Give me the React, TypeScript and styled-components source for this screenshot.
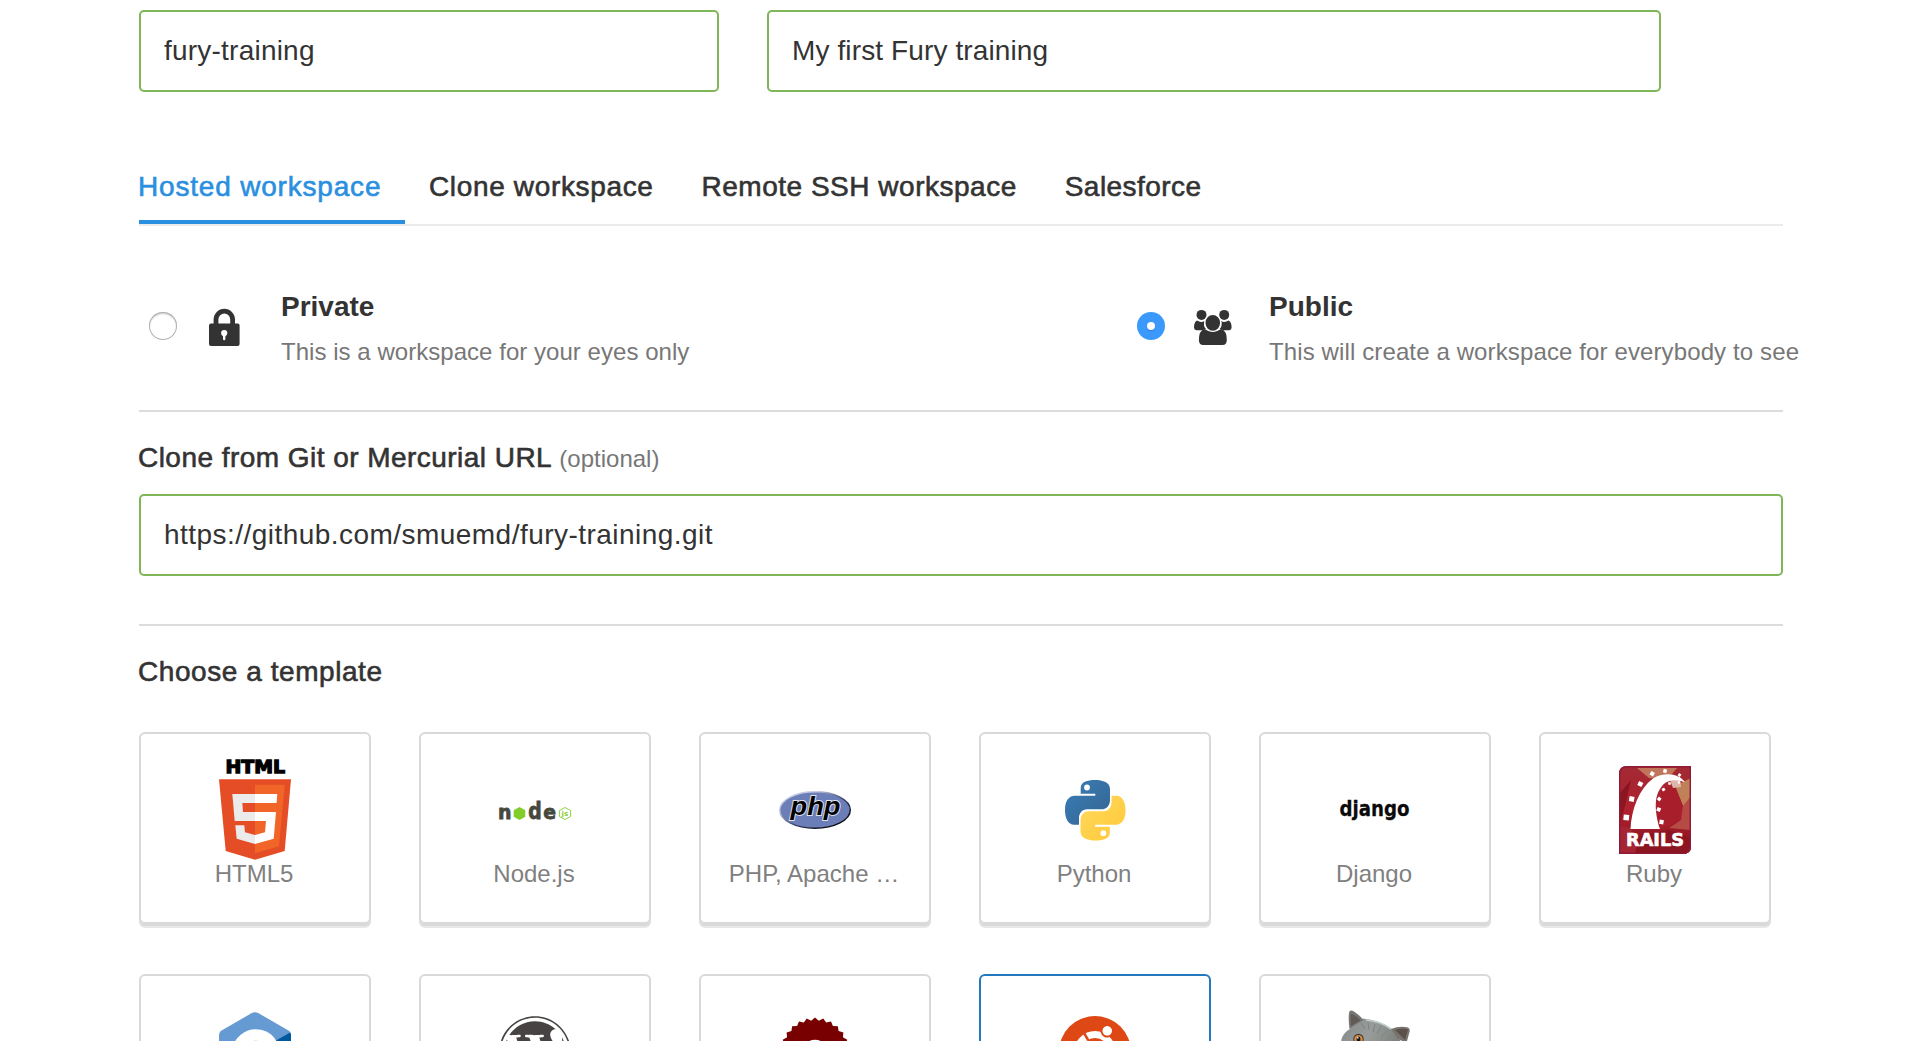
import React from 'react';
import styled, { createGlobalStyle } from 'styled-components';
import { FaWordpress } from 'react-icons/fa';

const GlobalStyle = createGlobalStyle`
  *, *::before, *::after { box-sizing: border-box; }
  body {
    margin: 0;
    background: #fff;
    color: #333;
    font-family: "Liberation Sans", Arial, Helvetica, sans-serif;
    overflow: hidden;
  }
`;

const Page = styled.main`
  height: 1041px;
  padding: 10px 0 0 139px;
  overflow: hidden;
`;

const Form = styled.form`
  width: 1644px;
  display: flex;
  flex-direction: column;
`;

const FieldRow = styled.div`
  display: flex;
  gap: 48px;
`;

const Field = styled.div<{ $width?: number; $tracking?: number }>`
  width: ${p => (p.$width ? `${p.$width}px` : '100%')};
  height: 82px;
  padding: 0 23px;
  display: flex;
  align-items: center;
  border: 2px solid #7fb658;
  border-radius: 5px;
  font-size: 28px;
  line-height: 32px;
  letter-spacing: ${p => p.$tracking ?? 0.22}px;
  white-space: nowrap;
`;

const Tabs = styled.nav`
  display: flex;
  margin-top: 60px;
  border-bottom: 2px solid #ebebeb;
`;

const Tab = styled.div<{ $active?: boolean; $tracking: number }>`
  height: 72px;
  padding: 19px 24px 0;
  font-size: 28px;
  line-height: 32px;
  letter-spacing: ${p => p.$tracking}px;
  white-space: nowrap;
  color: ${p => (p.$active ? '#2b8fe0' : '#333')};
  -webkit-text-stroke: 0.6px currentColor;
  border-bottom: 4px solid ${p => (p.$active ? '#2b8fe0' : 'transparent')};
  &:first-child {
    width: 266px;
    padding-left: 0;
    text-indent: -1px;
  }
`;

const Options = styled.div`
  display: flex;
  padding: 64px 0 42px 10px;
`;

const Option = styled.label`
  flex: 0 0 988px;
  display: flex;
  align-items: flex-start;
`;

const Radio = styled.span<{ $checked?: boolean }>`
  flex: none;
  width: 28px;
  height: 28px;
  margin-top: 22px;
  display: flex;
  align-items: center;
  justify-content: center;
  border-radius: 50%;
  background: ${p => (p.$checked ? '#3b99fc' : '#fff')};
  box-shadow: ${p => (p.$checked ? 'none' : 'inset 0 0 0 1px #b2b2b2, inset 0 2px 2px #ccc')};
  &::after {
    content: "";
    width: 8px;
    height: 8px;
    border-radius: 50%;
    background: #fff;
    box-shadow: ${p => (p.$checked ? '0 1px 1px #2a78d0' : 'none')};
  }
`;

const OptionIcon = styled.span<{ $indent: number }>`
  flex: none;
  width: 104px;
  padding: 19px 0 0 ${p => p.$indent}px;
  svg { display: block; overflow: visible; }
`;

const OptionText = styled.span`
  display: flex;
  flex-direction: column;
  gap: 13px;
  padding-top: 1px;
  white-space: nowrap;
`;

const OptionTitle = styled.strong`
  font-size: 28px;
  line-height: 32px;
`;

const OptionHint = styled.span<{ $tracking: number }>`
  color: #777;
  font-size: 24px;
  line-height: 32px;
  letter-spacing: ${p => p.$tracking}px;
`;

const Rule = styled.hr`
  width: 100%;
  height: 2px;
  margin: 0;
  border: 0;
  background: #dcdcdc;
`;

const Heading = styled.h2<{ $tracking: number; $bottom: number }>`
  height: 32px;
  margin: 30px 0 ${p => p.$bottom}px -1px;
  font-size: 28px;
  font-weight: 400;
  line-height: 32px;
  letter-spacing: ${p => p.$tracking}px;
  white-space: nowrap;
  -webkit-text-stroke: 0.6px currentColor;
`;

const Optional = styled.span`
  color: #777;
  font-size: 24px;
  line-height: 24px;
  letter-spacing: 0;
  -webkit-text-stroke: 0;
`;

const Spacer = styled.div`
  height: 48px;
`;

const Grid = styled.div`
  display: grid;
  grid-template-columns: repeat(6, 232px);
  gap: 50px 48px;
`;

const Card = styled.div<{ $selected?: boolean }>`
  height: 192px;
  padding-top: 28px;
  display: flex;
  flex-direction: column;
  align-items: center;
  border: 2px solid ${p => (p.$selected ? '#2478bd' : '#d9d9d9')};
  border-radius: 6px;
  box-shadow: 0 2px 0 ${p => (p.$selected ? '#2478bd' : '#d9d9d9')}, 0 4px 0 #e8e7e6;
`;

const Logo = styled.div`
  flex: none;
  height: 96px;
  display: flex;
  align-items: center;
  justify-content: center;
  svg { display: block; flex: none; overflow: visible; }
`;

const CardLabel = styled.span`
  padding-right: 2px;
  color: #808080;
  font-size: 24px;
  line-height: 32px;
  white-space: nowrap;
`;

const LockIcon = () => (
  <svg width="31" height="37" viewBox="0 0 31 37">
    <path d="M7 16V10.500a8.300 8.300 0 0 1 16.600 0V16" fill="none" stroke="#333" strokeWidth="4.800" />
    <rect x="0" y="14.500" width="30.600" height="22.500" rx="2" fill="#333" />
    <circle cx="15.200" cy="24" r="3.100" fill="#fff" />
    <path d="M15.200 24V30" stroke="#fff" strokeWidth="2.400" strokeLinecap="round" />
  </svg>
);

const GroupIcon = () => (
  <svg width="38" height="36" viewBox="0 -1 38 36" fill="#333">
    <circle cx="7.500" cy="4.900" r="5" />
    <circle cx="30.200" cy="4.900" r="5" />
    <path d="M3 10.500Q7 13 10.500 11Q9 16 12 19Q9 20 8 20.300H2.500Q0 20 0 17.500Q0 12 3 10.500Z" />
    <path d="M34.600 10.500Q30.600 13 27.100 11Q28.600 16 25.600 19Q28.600 20 29.600 20.300H35.100Q37.600 20 37.600 17.500Q37.600 12 34.600 10.500Z" />
    <path d="M10.500 19Q18.800 24.800 27.100 19Q32.800 20.500 32.800 30Q32.800 35 28.500 35H9.200Q4.900 35 4.900 30Q4.900 20.500 10.500 19Z" />
    <ellipse cx="18.800" cy="12.800" rx="8" ry="8.600" stroke="#fff" strokeWidth="1.400" />
  </svg>
);

const Html5Logo = () => (
  <svg width="72" height="103" viewBox="0 0 72 103">
    <text x="6.500" y="14.400" fontSize="18" fontWeight="700" fontFamily="DejaVu Sans" textLength="59.500" lengthAdjust="spacingAndGlyphs" fill="#000" stroke="#000" strokeWidth="1.300">HTML</text>
    <path d="M0 20.300H72L65.700 92L36 100.700L6.700 92Z" fill="#e44d26" />
    <path d="M36 25.700H65.700L60 87.300L36 94.300Z" fill="#f16529" />
    <path d="M36 35H13.300L15.700 62H36V53H24L23.300 44H36ZM36 76L26 73.300L25.300 66.300H16.300L17.700 79.700L36 85Z" fill="#ebebeb" />
    <path d="M36 35H58.300L57.600 44H36ZM36 53H57L54.700 79.700L36 85V76L46 73.300L47 62H36Z" fill="#fff" />
  </svg>
);

const NodeLogo = () => (
  <svg width="72" height="20" viewBox="0 0 72 20" fontFamily="DejaVu Sans" fontWeight="700">
    <g fontSize="20" fill="#46483e" stroke="#46483e" strokeWidth="0.800">
      <text x="-1" y="19" textLength="13.500" lengthAdjust="spacingAndGlyphs">n</text>
      <text x="29.200" y="19" fontSize="23" textLength="13.500" lengthAdjust="spacingAndGlyphs">d</text>
      <text x="44.300" y="19" textLength="12.800" lengthAdjust="spacingAndGlyphs">e</text>
    </g>
    <path d="M20.500 7L26.300 10.300V16.700L20.500 20L14.700 16.700V10.300Z" fill="#83cd29" />
    <path d="M66 7.500L71.600 10.500V16.500L66 19.500L60.400 16.500V10.500Z" fill="none" stroke="#8fd444" />
    <text x="62.600" y="16" fontSize="7" fill="#83cd29">js</text>
  </svg>
);

const PhpLogo = () => (
  <svg width="72" height="38" viewBox="0 0 72 38">
    <defs>
      <linearGradient id="phpRim" x1="0" y1="0" x2="1" y2="1">
        <stop offset="0.250" stopColor="#c5cbe5" />
        <stop offset="0.550" stopColor="#39426e" />
        <stop offset="0.800" stopColor="#0c0e1a" />
      </linearGradient>
    </defs>
    <ellipse cx="36" cy="19" rx="35.300" ry="18.200" fill="#6c7eb7" stroke="url(#phpRim)" strokeWidth="1.400" />
    <text x="11.500" y="24" fontSize="25" fontStyle="italic" fontWeight="700" fontFamily="Liberation Sans" textLength="50" lengthAdjust="spacingAndGlyphs" fill="#000" stroke="#dfe2ef" strokeWidth="1.800" paintOrder="stroke">php</text>
  </svg>
);

const snake = 'M15.700 13.700V8C15.700 2 22 0 30 0S45 2.500 45 9V20C45 26 41 29.300 36.500 29.300H22C17 29.300 14 33.500 14 38V44.800H9C3 44.800 0 38 0 30S3 15.800 10 15.800H30.300V13.700Z';

const PythonLogo = () => (
  <svg width="60.500" height="60.500" viewBox="0 0 60.500 60.500">
    <defs>
      <linearGradient id="pyBlue" x1="0" y1="0" x2="1" y2="1">
        <stop offset="0" stopColor="#387eb8" />
        <stop offset="1" stopColor="#366490" />
      </linearGradient>
      <linearGradient id="pyYellow" x1="0" y1="0" x2="1" y2="1">
        <stop offset="0" stopColor="#ffc836" />
        <stop offset="1" stopColor="#ffd95f" />
      </linearGradient>
    </defs>
    <path d={snake} fill="url(#pyBlue)" />
    <path d={snake} fill="url(#pyYellow)" transform="rotate(180 30.250 30.250)" />
    <circle cx="22" cy="7.500" r="2.900" fill="#fff" />
    <circle cx="38.400" cy="53.200" r="2.900" fill="#fff" />
  </svg>
);

const DjangoLogo = () => (
  <svg width="72" height="28" viewBox="0 0 72 28">
    <text x="0.500" y="20.300" fontSize="22" fontWeight="700" fontFamily="DejaVu Sans" textLength="70" lengthAdjust="spacingAndGlyphs" fill="#0a0a0a" stroke="#0a0a0a" strokeWidth="0.300">django</text>
  </svg>
);

const ties: [number, number, number, number][] = [
  [7.300, 51.500, 5.500, 5], [12.700, 33, 5, 10], [21.300, 18, 4.600, 25], [33.200, 7.800, 4, 30],
  [46, 5, 3.500, 15], [60.500, 9, 2.800, 40], [44.500, 23.500, 3, 60], [40.200, 33, 3.400, 40],
  [39.700, 43.500, 3.800, 25], [42.500, 56, 4.200, 10], [50.500, 17.500, 2.500, 10], [60, 16.500, 2.200, 0],
];

const RailsLogo = () => (
  <svg width="72" height="88" viewBox="0 0 72 88">
    <defs>
      <linearGradient id="railsBg" x1="0" y1="0" x2="0" y2="1">
        <stop offset="0" stopColor="#a22a34" />
        <stop offset="0.500" stopColor="#b0202e" />
        <stop offset="1" stopColor="#841420" />
      </linearGradient>
      <clipPath id="railsClip"><path d="M8 0H72V80Q72 88 64 88H0V8Q0 0 8 0Z" /></clipPath>
    </defs>
    <g clipPath="url(#railsClip)">
      <rect width="72" height="88" fill="url(#railsBg)" />
      <path d="M18 2H58L48 14L30 12Z" fill="#c1755a" />
      <path d="M0 28L12 14L6 40L0 60Z" fill="#8b1622" />
      <path d="M56 20L72 12V44L64 40Z" fill="#c08058" />
      <path d="M64 40L72 30V64L50 62L62 54Z" fill="#b64a44" />
      <path d="M42 22L56 20L64 40L54 58L40 64Z" fill="#a81e2a" />
      <path d="M0 60L12 62L20 88H0Z" fill="#a52632" />
      <path d="M20 70L50 64L72 72V88H16Z" fill="#8b1521" />
      <path d="M51 14L61 11L62 21L54 22Z" fill="#e0b5aa" />
    </g>
    <path d="M8 .700H71.300V80Q71.300 87.300 64 87.300H.700V8Q.700 .700 8 .700Z" fill="none" stroke="#8f1a35" strokeWidth="1.400" />
    <path d="M11.500 63C12.500 43 20 23 34 12.500C46 5 61 8 66 16.200C56 12.500 46 13.500 41 23C34 33 37 51 41 63Z" fill="#fff" />
    {ties.map(([x, y, s, a]) => (
      <rect key={`${x}-${y}`} x={x - s / 2} y={y - s / 2} width={s} height={s} fill="#fff" transform={`rotate(${a} ${x} ${y})`} />
    ))}
    <text x="7" y="80.300" fontSize="17" fontWeight="700" fontFamily="DejaVu Sans" textLength="58" fill="#fff" stroke="#fff" strokeWidth="0.600" lengthAdjust="spacingAndGlyphs">RAILS</text>
  </svg>
);

const CppLogo = () => (
  <svg width="72" height="81" viewBox="0 0 72 81">
    <defs>
      <clipPath id="cppHex"><path d="M32.500 1.200Q36 -.800 39.500 1.200L69 18.200Q72 20 72 23.500V57.500Q72 61 69 62.800L39.500 79.800Q36 81.800 32.500 79.800L3 62.800Q0 61 0 57.500V23.500Q0 20 3 18.200Z" /></clipPath>
    </defs>
    <g clipPath="url(#cppHex)">
      <rect width="72" height="81" fill="#659ad2" />
      <path d="M72 20L36 40.500L72 61Z" fill="#00599c" />
      <path d="M0 61L36 40.500L72 61V81H0Z" fill="#004482" />
      <path d="M53 33A18 18 0 1 0 53 49" fill="none" stroke="#fff" strokeWidth="11.500" />
    </g>
  </svg>
);

const sealPoints = Array.from({ length: 52 }, (_, i) => {
  const angle = (i * Math.PI) / 26;
  const radius = i % 2 ? 31.5 : 34.5;
  return `${(36 + radius * Math.sin(angle)).toFixed(2)},${(36 - radius * Math.cos(angle)).toFixed(2)}`;
}).join(' ');

const SealLogo = () => (
  <svg width="72" height="72" viewBox="0 0 72 72">
    <polygon points={sealPoints} fill="#780000" />
    <circle cx="36" cy="36" r="12.300" fill="#fff" />
  </svg>
);

const UbuntuLogo = () => (
  <svg width="72" height="72" viewBox="5 5 90 90">
    <circle cx="50" cy="50" r="45" fill="#dd4814" />
    <circle cx="50" cy="50" r="21.800" fill="none" stroke="#fff" strokeWidth="8.600" />
    {[0, 120, 240].map(a => (
      <g key={a} transform={`rotate(${a} 50 50)`}>
        <circle cx="19.400" cy="50" r="8.440" fill="#dd4814" />
        <path d="M67 50H77" stroke="#dd4814" strokeWidth="3.240" />
        <circle cx="19.400" cy="50" r="6" fill="#fff" />
      </g>
    ))}
  </svg>
);

const CatPicture = () => (
  <svg width="72" height="84" viewBox="0 0 72 84">
    <defs>
      <linearGradient id="fur" x1="0" y1="0" x2="1" y2="0.600">
        <stop offset="0" stopColor="#85898a" />
        <stop offset="0.400" stopColor="#989d9b" />
        <stop offset="1" stopColor="#6d706c" />
      </linearGradient>
    </defs>
    <path d="M24 8.500Q40 10 53 19L68 40V84H4Q0 45 2.500 29Q5 22 11 19Z" fill="url(#fur)" />
    <path d="M10.500 19Q9 8 10.300 1.500Q12 -.500 15 1.500Q21 5.500 24.500 10Q17 14 11 19Z" fill="#767774" />
    <path d="M12 16Q11 8 12 3.500Q18 6 21.500 10.500Z" fill="#625b55" />
    <path d="M52 19Q61 15.500 69 17.500Q71.500 19 70.500 22L67.500 33L59 29Z" fill="#77746f" />
    <path d="M56 20Q63 18 69 19.500L66 30Z" fill="#5c504a" />
    <path d="M22 13L26 19M29 12L30 20M36 14L34 22M42 16L38 24M48 21L42 27M53 25L47 31" stroke="#808480" strokeWidth="1" fill="none" />
    <path d="M27 10Q41 11 52 19" stroke="#c1ceca" strokeWidth="1.600" fill="none" />
    <circle cx="19.500" cy="29" r="5.200" fill="#40372f" />
    <circle cx="19.500" cy="29.300" r="4.200" fill="#d98a3a" />
    <ellipse cx="19.500" cy="29.500" rx="1.900" ry="3" fill="#17191c" />
    <circle cx="18.700" cy="27.700" r="0.900" fill="#cfe0ee" />
  </svg>
);

const templates: { label: string; logo: React.ReactNode; selected?: boolean }[] = [
  { label: 'HTML5', logo: <Html5Logo /> },
  { label: 'Node.js', logo: <NodeLogo /> },
  { label: 'PHP, Apache …', logo: <PhpLogo /> },
  { label: 'Python', logo: <PythonLogo /> },
  { label: 'Django', logo: <DjangoLogo /> },
  { label: 'Ruby', logo: <RailsLogo /> },
  { label: '', logo: <CppLogo /> },
  { label: '', logo: <FaWordpress size={74} color="#464342" /> },
  { label: '', logo: <SealLogo /> },
  { label: '', logo: <UbuntuLogo />, selected: true },
  { label: '', logo: <CatPicture /> },
];

export default function App() {
  return (
    <>
      <GlobalStyle />
      <Page>
        <Form>
          <FieldRow>
            <Field $width={580}>fury-training</Field>
            <Field $width={894} $tracking={0.12}>My first Fury training</Field>
          </FieldRow>

          <Tabs>
            <Tab $active $tracking={0.81}>Hosted workspace</Tab>
            <Tab $tracking={0.65}>Clone workspace</Tab>
            <Tab $tracking={0.51}>Remote SSH workspace</Tab>
            <Tab $tracking={0.44}>Salesforce</Tab>
          </Tabs>

          <Options>
            <Option>
              <Radio />
              <OptionIcon $indent={32}><LockIcon /></OptionIcon>
              <OptionText>
                <OptionTitle>Private</OptionTitle>
                <OptionHint $tracking={0.04}>This is a workspace for your eyes only</OptionHint>
              </OptionText>
            </Option>
            <Option>
              <Radio $checked />
              <OptionIcon $indent={29}><GroupIcon /></OptionIcon>
              <OptionText>
                <OptionTitle>Public</OptionTitle>
                <OptionHint $tracking={0.12}>This will create a workspace for everybody to see</OptionHint>
              </OptionText>
            </Option>
          </Options>

          <Rule />
          <Heading $tracking={0.46} $bottom={20}>
            Clone from Git or Mercurial URL <Optional>(optional)</Optional>
          </Heading>
          <Field $tracking={0.46}>https://github.com/smuemd/fury-training.git</Field>
          <Spacer />

          <Rule />
          <Heading $tracking={0.56} $bottom={44}>Choose a template</Heading>
          <Grid>
            {templates.map((t, i) => (
              <Card key={i} $selected={t.selected}>
                <Logo>{t.logo}</Logo>
                {t.label && <CardLabel>{t.label}</CardLabel>}
              </Card>
            ))}
          </Grid>
        </Form>
      </Page>
    </>
  );
}
